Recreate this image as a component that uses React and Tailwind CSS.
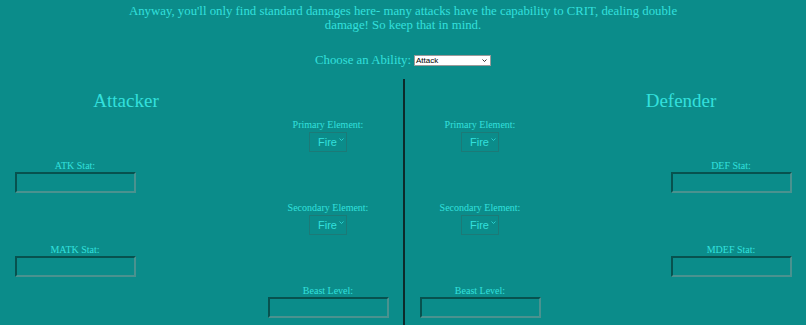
import React from 'react';

const txt = 'text-[#33e0dd]';

function Chevron({ className }) {
  return (
    <svg viewBox="0 0 10 6" className={className} fill="none" stroke="currentColor" strokeWidth="1.6">
      <path d="M1 1l4 4 4-4" />
    </svg>
  );
}

function StatInput({ label, mt }) {
  return (
    <div className={`flex flex-col items-center ${mt}`}>
      <div className={`text-[10px] leading-[12px] ${txt}`}>{label}</div>
      <div className="h-[21px] w-[121px] border-2 border-t-[#07524f] border-l-[#07524f] border-b-[#4a928f] border-r-[#4a928f]" />
    </div>
  );
}

function ElementSelect({ label, mt }) {
  return (
    <div className={`flex flex-col items-center ${mt}`}>
      <div className={`text-[10px] leading-[12px] ${txt}`}>{label}</div>
      <div className="mt-[1px] flex h-[20px] w-[38px] items-start justify-end border border-[#1c7a77] pr-[2px] pt-[3px]">
        <span className={`font-['Liberation_Sans',Arial,sans-serif] text-[11px] leading-[13px] ${txt}`}>Fire</span>
        <Chevron className={`ml-[2px] mt-[2px] w-[5px] ${txt}`} />
      </div>
    </div>
  );
}

function ElementColumn() {
  return (
    <div className="flex w-[150px] flex-col">
      <ElementSelect label="Primary Element:" mt="mt-[7px]" />
      <ElementSelect label="Secondary Element:" mt="mt-[50px]" />
      <StatInput label="Beast Level:" mt="mt-[50px]" />
    </div>
  );
}

function StatColumn({ a, b }) {
  return (
    <div className="flex w-[150px] flex-col">
      <StatInput label={a} mt="mt-[48px]" />
      <StatInput label={b} mt="mt-[51px]" />
    </div>
  );
}

export default function App() {
  return (
    <div className="h-[325px] w-[806px] overflow-hidden bg-[#0b8c8a] font-['Liberation_Serif','Times_New_Roman',serif]">
      <p className={`mx-auto w-[575px] pt-[4px] text-center text-[12.8px] leading-[14px] ${txt}`}>
        Anyway, you'll only find standard damages here- many attacks have the capability to CRIT, dealing double damage! So keep that in mind.
      </p>

      <div className="mt-[21px] flex h-[14px] items-center justify-center">
        <span className={`text-[12.8px] leading-[14px] ${txt}`}>Choose an Ability:</span>
        <div className="ml-[3px] flex h-[11px] w-[77px] items-center justify-between border border-[#9a9a9a] bg-white pl-[1px] pr-[3px] font-['Liberation_Sans',Arial,sans-serif] text-[8px] leading-[9px] text-black">
          <span>Attack</span>
          <Chevron className="w-[5px] text-black" />
        </div>
      </div>

      <div className="mt-[12px] flex h-[246px]">
        <div className="w-[403px]">
          <div className={`mt-[11px] w-[252px] text-center text-[19px] leading-[22px] ${txt}`}>Attacker</div>
          <div className="flex justify-between">
            <StatColumn a="ATK Stat:" b="MATK Stat:" />
            <ElementColumn />
          </div>
        </div>
        <div className="w-[2px] bg-[#0d2b2b]" />
        <div className="w-[401px]">
          <div className={`ml-auto mt-[11px] w-[250px] text-center text-[19px] leading-[22px] ${txt}`}>Defender</div>
          <div className="flex justify-between">
            <ElementColumn />
            <StatColumn a="DEF Stat:" b="MDEF Stat:" />
          </div>
        </div>
      </div>
    </div>
  );
}
